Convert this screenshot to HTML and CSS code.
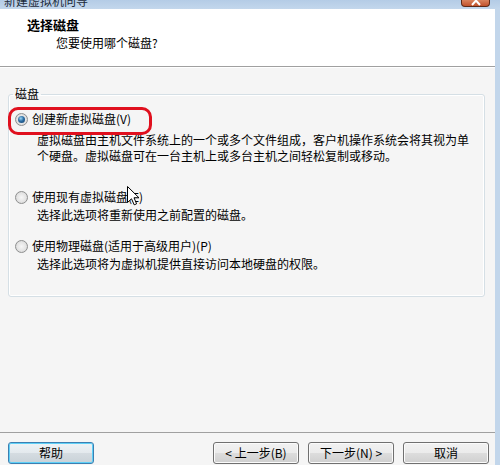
FILE: index.html
```html
<!DOCTYPE html>
<html lang="zh-CN">

<head>
    <meta charset="UTF-8">
    <title>新建虚拟机向导</title>
    <link rel="stylesheet" href="styles.css">
</head>

<body>
    <div class="window">
        <div class="titlebar">
            <span class="title">新建虚拟机向导</span>
            <span class="close">
                <svg width="12" height="6" viewBox="0 0 12 6"><path d="M2 -4 L10 5 M10 -4 L2 5" stroke="#fff" stroke-width="2" fill="none"/></svg>
            </span>
        </div>

        <div class="client">
            <div class="header">
                <div class="page-title">选择磁盘</div>
                <div class="page-sub">您要使用哪个磁盘?</div>
            </div>

            <div class="body">
                <fieldset class="group">
                    <legend>磁盘</legend>

                    <!-- option 1 (marked in red) -->
                    <div class="option option-1">
                        <div class="option-row marked">
                            <span class="radio checked"></span>
                            <span>创建新虚拟磁盘(V)</span>
                        </div>
                        <p class="option-desc">虚拟磁盘由主机文件系统上的一个或多个文件组成，客户机操作系统会将其视为单<br>个硬盘。虚拟磁盘可在一台主机上或多台主机之间轻松复制或移动。</p>
                    </div>

                    <div class="option option-2">
                        <div class="option-row">
                            <span class="radio"></span>
                            <span>使用现有虚拟磁盘(E)</span>
                        </div>
                        <p class="option-desc">选择此选项将重新使用之前配置的磁盘。</p>
                    </div>

                    <div class="option option-3">
                        <div class="option-row">
                            <span class="radio"></span>
                            <span>使用物理磁盘(适用于高级用户)(P)</span>
                        </div>
                        <p class="option-desc">选择此选项将为虚拟机提供直接访问本地硬盘的权限。</p>
                    </div>
                </fieldset>

                <svg class="cursor" width="13" height="20" viewBox="0 0 13 20">
                    <path d="M0.5 0.5 L0.5 16.5 L4.5 12.8 L7.2 18.8 L9.6 17.8 L7 11.8 L12 11.8 Z" fill="#fff" stroke="#000" stroke-width="1" stroke-linejoin="round"/>
                </svg>
            </div>

            <div class="footer">
                <button class="btn btn-default">帮助</button>
                <div class="nav">
                    <button class="btn">&lt; 上一步(B)</button>
                    <button class="btn">下一步(N) &gt;</button>
                    <button class="btn">取消</button>
                </div>
            </div>
        </div>
    </div>
</body>

</html>
```

FILE: styles.css
```css
* {
    box-sizing: border-box;
    margin: 0;
    padding: 0;
}

body {
    margin: 0;
    width: 500px;
    height: 465px;
    overflow: hidden;
    background-color: #c2d6eb;
    font-family: "Noto Sans CJK SC", sans-serif;
    font-size: 12px;
    line-height: 16px;
    color: #000;
}

.window {
    display: flex;
    flex-direction: column;
    height: 465px;
}

/* Title bar, mostly scrolled off the top */
.titlebar {
    height: 9px;
    overflow: hidden;
    display: flex;
    justify-content: space-between;
    padding: 0 10px 0 4px;
    background: linear-gradient(#b4cce6, #c3d7ec);
}

.titlebar .title {
    margin-top: -7px;
    color: #1b2a3a;
    font-size: 12px;
}

.titlebar .close {
    width: 29px;
    height: 7px;
    display: flex;
    justify-content: center;
    border: 1px solid #5d2a18;
    border-top: none;
    border-radius: 0 0 4px 4px;
    background: linear-gradient(#d9835e, #c2522c);
}

.client {
    flex: 1;
    display: flex;
    flex-direction: column;
    margin-right: 5px;
    background-color: #f5f5f5;
}

/* Header */
.header {
    height: 58px;
    padding: 8px 0 0 27px;
    background-color: #fff;
    border-bottom: 1px solid #a0a0a0;
}

.page-title {
    font-weight: bold;
    font-size: 13px;
}

.page-sub {
    margin-top: 2px;
    padding-left: 29px;
}

/* Body */
.body {
    flex: 1;
    position: relative;
    padding: 18px 10px 0 8px;
    border-top: 1px solid #fff;
}

.group {
    margin: 0;
    min-width: 0;
    padding: 9px 0 24px 0;
    border: 1px solid #d5dfe5;
    border-radius: 3px;
    box-shadow: inset 0 0 0 1px #fff;
}

.group legend {
    margin-left: 4px;
    padding: 0 2px;
    line-height: 16px;
}

.option-1 .option-desc {
    margin-top: 5px;
}

.option-2 {
    margin-top: 25px;
}

.option-3 {
    margin-top: 15px;
}

.option-row {
    position: relative;
    display: flex;
    align-items: center;
    gap: 4px;
    height: 16px;
    padding-left: 6px;
}

/* red annotation around the first choice */
.option-row.marked::after {
    content: '';
    position: absolute;
    left: -1px;
    top: -4px;
    width: 138px;
    height: 22px;
    border: 3px solid #e0101e;
    border-radius: 10px;
}

.option-desc {
    margin-top: 2px;
    padding-left: 28px;
    white-space: nowrap;
}

.radio {
    position: relative;
    flex: none;
    width: 13px;
    height: 13px;
    border-radius: 50%;
    border: 1px solid #8e8f8f;
    background: radial-gradient(circle, #f6f6f6 0, #e4e4e4 55%, #cdcdcd 100%);
}

.radio.checked::after {
    content: '';
    position: absolute;
    left: 2px;
    top: 2px;
    width: 7px;
    height: 7px;
    border-radius: 50%;
    background: radial-gradient(circle at 40% 35%, #9cd6f5 0, #2d6ea4 45%, #0f3a63 100%);
}

.cursor {
    position: absolute;
    left: 127px;
    top: 118px;
}

/* Footer with buttons */
.footer {
    height: 33px;
    display: flex;
    justify-content: space-between;
    padding: 9px 6px 0 8px;
    border-top: 1px solid #a0a0a0;
}

.nav {
    display: flex;
    gap: 9px;
}

.btn {
    width: 86px;
    height: 22px;
    border: 1px solid #707070;
    border-radius: 3px;
    background: linear-gradient(#f2f2f2 0%, #ebebeb 50%, #dddddd 50%, #cfcfcf 100%);
    box-shadow: inset 0 0 0 1px #fbfbfb;
    font-family: "Noto Sans CJK SC", sans-serif;
    font-size: 12px;
    line-height: 16px;
    color: #000;
    cursor: pointer;
}

.btn-default {
    border-color: #3c7fb1;
    background: linear-gradient(#eef3f6 0%, #e3e9ed 50%, #d5dce1 50%, #c9d2d8 100%);
    box-shadow: inset 0 0 0 1px #5fd0f7;
}
```
